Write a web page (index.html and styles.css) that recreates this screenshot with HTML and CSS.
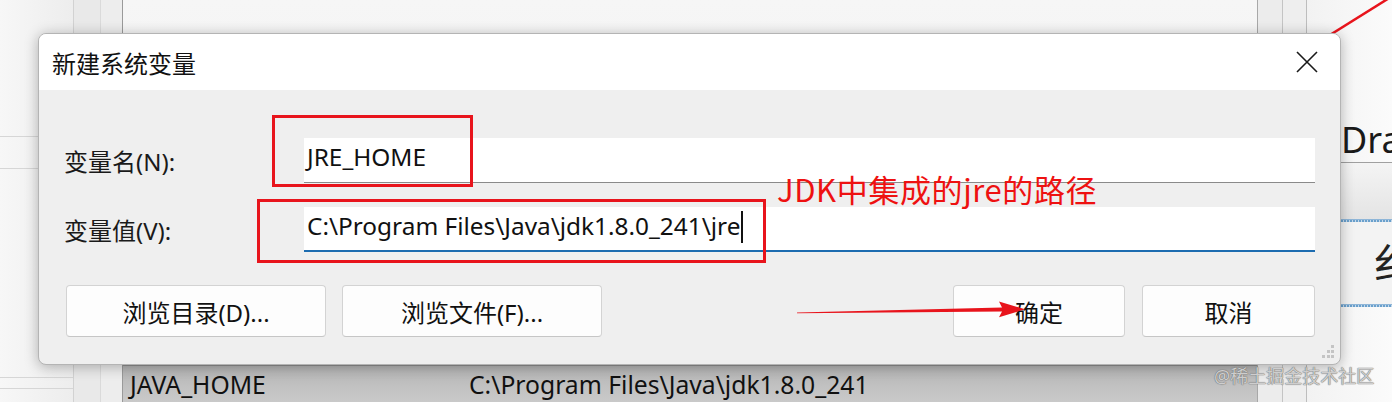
FILE: index.html
```html
<!DOCTYPE html>
<html lang="zh-CN">
<head>
<meta charset="utf-8">
<title>新建系统变量</title>
<link rel="stylesheet" href="styles.css">
</head>
<body>
<div class="desktop">
  <div class="col col-left">
    <div class="hline hl1"></div>
    <div class="hline hl2"></div>
    <div class="spacer"></div>
    <div class="hline hl3"></div>
    <div class="hline hl4"></div>
  </div>
  <div class="col col-a"></div>
  <div class="col col-b"></div>
  <div class="col col-main">
    <div class="spacer"></div>
    <div class="list-row">
      <span class="cell cell-name">JAVA_HOME</span>
      <span class="cell cell-value">C:\Program Files\Java\jdk1.8.0_241</span>
    </div>
  </div>
  <div class="col col-c"></div>
  <div class="col col-d"></div>
  <div class="col col-right">
    <div class="rp-top"></div>
    <div class="rp-btn">Dra</div>
    <div class="rp-gap"></div>
    <div class="rp-wave"></div>
    <div class="rp-char">纟</div>
    <div class="rp-wave"></div>
    <div class="spacer"></div>
  </div>

  <svg class="red-line" width="80" height="40" viewBox="0 0 80 40"><line x1="0" y1="37" x2="64" y2="-3" stroke="#e8141c" stroke-width="2.5"/></svg>

  <div class="dialog">
    <div class="titlebar">
      <span class="title">新建系统变量</span>
      <span class="close">
        <svg width="22" height="22" viewBox="0 0 22 22"><path d="M1 1 L21 21 M21 1 L1 21" stroke="#1a1a1a" stroke-width="1.6" fill="none"/></svg>
      </span>
    </div>
    <div class="body">
      <div class="field">
        <label class="label">变量名(N):</label>
        <div class="input">JRE_HOME</div>
      </div>
      <div class="field">
        <label class="label">变量值(V):</label>
        <div class="input input-focus">C:\Program Files\Java\jdk1.8.0_241\jre<span class="caret"></span></div>
      </div>
      <div class="buttons">
        <div class="btn btn-wide">浏览目录(D)...</div>
        <div class="btn btn-wide">浏览文件(F)...</div>
        <div class="grow"></div>
        <div class="btn btn-ok">确定</div>
        <div class="btn btn-cancel">取消</div>
      </div>
    </div>
    <svg class="grip" width="16" height="16" viewBox="0 0 16 16">
      <rect x="12" y="1" width="3" height="3" fill="#c4c4c4"/>
      <rect x="8" y="6" width="3" height="3" fill="#c4c4c4"/>
      <rect x="12" y="6" width="3" height="3" fill="#c4c4c4"/>
      <rect x="3" y="11" width="3" height="3" fill="#c4c4c4"/>
      <rect x="8" y="11" width="3" height="3" fill="#c4c4c4"/>
      <rect x="12" y="11" width="3" height="3" fill="#c4c4c4"/>
    </svg>
  </div>

  <div class="mark mark-name"></div>
  <div class="mark mark-value"></div>
  <div class="note">JDK中集成的jre的路径</div>
  <svg class="arrow" width="232" height="20" viewBox="797 300 232 20">
    <polygon points="797,312.6 1002,307.6 999,301.5 1025,309.3 999,317.2 1002,311.6 797,313.2" fill="#e8141c"/>
  </svg>
  <div class="watermark">@稀土掘金技术社区</div>
</div>
</body>
</html>
```
FILE: styles.css
```css
* { box-sizing: border-box; }
html, body { margin: 0; padding: 0; }
body {
  width: 1392px;
  height: 402px;
  overflow: hidden;
  font-family: "Noto Sans", "Noto Sans CJK SC", sans-serif;
  color: #1a1a1a;
  background: #f2f2f2;
}
.desktop {
  position: relative;
  width: 1392px;
  height: 402px;
  display: flex;
  overflow: hidden;
}
.col { height: 402px; display: flex; flex-direction: column; }
.spacer { flex: 1; }
.col-left {
  width: 73px;
  background: linear-gradient(90deg, #f7f7f7 0%, #ededed 100%);
}
.hline { height: 1px; background: #d6d6d6; }
.hl1 { margin-top: 136px; }
.hl2 { margin-top: 31px; }
.hl3 { margin-bottom: 10px; }
.hl4 { margin-bottom: 13px; }
.col-a {
  width: 27px;
  background: #e9e9e9;
  border-left: 1px solid #d2d2d2;
}
.col-b {
  width: 23px;
  background: #ededed;
  border-left: 1px solid #dadada;
  border-right: 1px solid #9a9a9a;
}
.col-main {
  width: 1134px;
  background: linear-gradient(180deg, #f6f6f6 0%, #ececec 100%);
}
.list-row {
  height: 37px;
  background: linear-gradient(180deg, #b4b4b4 0%, #c2c2c2 60%, #c9c9c9 100%);
  border-top: 1px solid #8e8e8e;
  display: flex;
  align-items: center;
  font-size: 24.7px;
  color: #111;
  padding-left: 7px;
}
.cell-name { width: 339px; }
.col-c {
  width: 25px;
  background: #ececec;
  border-left: 1px solid #a8a8a8;
}
.col-d {
  width: 25px;
  background: #eeeeee;
  border-left: 1px solid #c4c4c4;
  border-right: 1px solid #bdbdbd;
}
.col-right {
  width: 85px;
  background: linear-gradient(90deg, #f2f2f2, #fbfbfb);
  padding-left: 34px;
}
.rp-top { height: 118px; }
.rp-btn {
  font-size: 36px;
  line-height: 44px;
  color: #1a1a1a;
  border-bottom: 1px solid #a0a0a0;
  white-space: nowrap;
  overflow: hidden;
}
.rp-gap {
  height: 56px;
  background: linear-gradient(180deg, #f4f4f4, #e4e4e4);
}
.rp-wave {
  height: 3px;
  background: repeating-linear-gradient(90deg, #6aa0cc 0 2px, #c6d9ea 2px 3px);
  border-top: 1px solid #8fb6d8;
}
.rp-char {
  height: 82px;
  font-size: 42px;
  line-height: 82px;
  color: #222;
  padding-left: 32px;
  background: #f3f3f3;
  white-space: nowrap;
  overflow: hidden;
}

.red-line { position: absolute; left: 1330px; top: -2px; }

/* dialog */
.dialog {
  position: absolute;
  left: 38px;
  top: 33px;
  width: 1303px;
  height: 332px;
  border-radius: 8px;
  background: #efefef;
  border: 1px solid #b4b4b4;
  box-shadow: 0 2px 14px rgba(0, 0, 0, 0.28);
  overflow: hidden;
  display: flex;
  flex-direction: column;
}
.titlebar {
  height: 56px;
  background: #ffffff;
  display: flex;
  align-items: center;
  justify-content: space-between;
  padding: 0 22px 0 13px;
}
.title { font-size: 24px; color: #111; }
.close { display: flex; width: 22px; height: 22px; }
.body {
  flex: 1;
  padding: 48px 25px 27px 25px;
  display: flex;
  flex-direction: column;
}
.field {
  display: flex;
  align-items: center;
  height: 45px;
  margin-bottom: 24px;
}
.label {
  width: 240px;
  flex: none;
  font-size: 24px;
  color: #1a1a1a;
}
.input {
  flex: 1;
  height: 45px;
  background: #ffffff;
  border-bottom: 1px solid #8a8a8a;
  font-size: 24.4px;
  line-height: 36px;
  padding: 1px 0 0 3px;
  color: #111;
  white-space: nowrap;
  display: flex;
  align-items: flex-start;
}
.input-focus { border-bottom: 2px solid #1c6cb0; }
.caret {
  display: inline-block;
  width: 1.5px;
  height: 32px;
  background: #111;
  margin-top: 3px;
  margin-left: 1px;
}
.buttons {
  margin-top: 9px;
  display: flex;
  align-items: center;
  gap: 16px;
  padding-left: 2px;
}
.grow { flex: 1; }
.btn {
  height: 52px;
  background: #fdfdfd;
  border: 1px solid #d3d3d3;
  border-bottom-color: #c6c6c6;
  border-radius: 4px;
  font-size: 24px;
  color: #111;
  display: flex;
  align-items: center;
  justify-content: center;
}
.btn-wide { width: 260px; }
.btn-ok { width: 172px; margin-right: 1px; }
.btn-cancel { width: 173px; }
.grip { position: absolute; right: 5px; bottom: 4px; }

/* annotations */
.mark {
  position: absolute;
  border: 3px solid #e8141c;
}
.mark-name { left: 272px; top: 115px; width: 201px; height: 72px; }
.mark-value { left: 257px; top: 199px; width: 509px; height: 64px; }
.note {
  position: absolute;
  left: 777px;
  top: 168px;
  font-size: 31px;
  line-height: 42px;
  color: #ee1111;
  font-family: "Noto Sans CJK SC", sans-serif;
  letter-spacing: 0.6px;
}
.arrow { position: absolute; left: 797px; top: 300px; }
.watermark {
  position: absolute;
  left: 1214px;
  top: 364px;
  font-size: 18px;
  line-height: 24px;
  color: rgba(225, 225, 225, 0.85);
  text-shadow: 0 0 1px #666, 0 0 1px #666;
}
```
